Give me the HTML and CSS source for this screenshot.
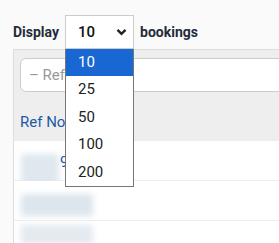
FILE: index.html
```html
<!DOCTYPE html>
<html lang="en">
<head>
    <meta charset="UTF-8">
    <meta name="viewport" content="width=device-width, initial-scale=1.0">
    <title>Bookings</title>
    <link rel="stylesheet" href="styles.css">
</head>
<body>
    <div class="toolbar">
        <span class="label">Display</span>
        <div class="select">
            <span>10</span>
            <svg class="chevron" width="11" height="8" viewBox="0 0 11 8"><path d="M1.5 1.8 L5.5 5.8 L9.5 1.8" fill="none" stroke="#222" stroke-width="2.4"/></svg>
        </div>
        <span class="label">bookings</span>
    </div>

    <div class="panel">
        <div class="search">
            <div class="search-input">&ndash; Refe</div>
        </div>
        <div class="thead">Ref No</div>
        <div class="row">
            <div class="blur b1"></div>
            <span class="ref">9</span>
        </div>
        <div class="row">
            <div class="blur b2"></div>
        </div>
        <div class="row last">
            <div class="blur b3"></div>
        </div>
    </div>

    <ul class="options">
        <li class="selected">10</li>
        <li>25</li>
        <li>50</li>
        <li>100</li>
        <li>200</li>
    </ul>
</body>
</html>
```

FILE: styles.css
```css
body {
    margin: 0;
    height: 243px;
    background: #fafafa;
    font-family: Roboto, "Liberation Sans", sans-serif;
    color: #222;
    overflow: hidden;
}
.toolbar {
    display: flex;
    align-items: center;
    gap: 6px;
    padding: 15px 0 0 13px;
    height: 34px;
}
.label {
    font-weight: bold;
    font-size: 14px;
    color: #252c3a;
}
.select {
    box-sizing: border-box;
    width: 69px;
    height: 34px;
    border: 1px solid #ccc;
    background: #fff;
    display: flex;
    align-items: center;
    justify-content: space-between;
    padding: 0 6px 0 12px;
    font-size: 15px;
    font-weight: 500;
    color: #111;
}
.panel {
    margin-left: 13px;
    height: 194px;
    overflow: hidden;
    border-left: 1px solid #ddd;
    border-top: 1px solid #ddd;
    background: #eee;
    padding-top: 8px;
    box-sizing: border-box;
}
.search {
    padding-left: 6px;
}
.search-input {
    box-sizing: border-box;
    width: calc(100% + 20px);
    height: 34px;
    background: #fff;
    border: 1px solid #ccc;
    border-radius: 6px;
    padding: 7px 8px;
    font-size: 15px;
    color: #999;
    white-space: nowrap;
}
.thead {
    height: 49px;
    padding: 21px 0 0 6px;
    box-sizing: border-box;
    font-size: 15px;
    color: #1d5aa6;
}
.row {
    position: relative;
    height: 40px;
    background: #fff;
    border-bottom: 1px solid #eee;
    box-sizing: border-box;
}
.row.last {
    height: 23px;
    border-bottom: none;
}
.blur {
    position: absolute;
    background: #d8e3ec;
    filter: blur(3px);
}
.b1 {
    left: 7px;
    top: 13px;
    width: 38px;
    height: 46px;
    background: #dfe8ef;
}
.b2 {
    left: 7px;
    top: 13px;
    width: 72px;
    height: 22px;
    background: #dde6ed;
}
.b3 {
    left: 7px;
    top: 4px;
    width: 72px;
    height: 19px;
    background: #e3eaf0;
}
.ref {
    position: absolute;
    left: 46px;
    top: 12px;
    font-size: 15px;
    color: #1d5aa6;
}
.options {
    position: absolute;
    left: 65px;
    top: 49px;
    width: 69px;
    box-sizing: border-box;
    margin: 0;
    padding: 0;
    list-style: none;
    background: #fff;
    border: 1px solid #767676;
    border-top: none;
}
.options li {
    height: 27.4px;
    line-height: 27px;
    padding-left: 12px;
    font-size: 15px;
    color: #222;
}
.options li.selected {
    background: #1967d2;
    color: #fff;
}
```
